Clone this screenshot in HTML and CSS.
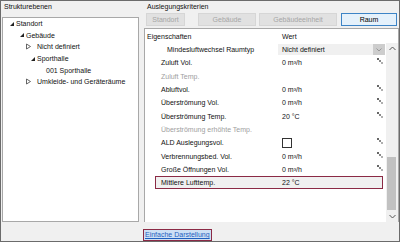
FILE: index.html
```html
<!DOCTYPE html>
<html lang="de">
<head>
    <meta charset="UTF-8">
    <title>Auslegungskriterien</title>
    <link rel="stylesheet" href="styles.css">
</head>
<body>
    <div class="window">
        <div class="pane">
            <div class="pane-title">Strukturebenen</div>
            <div class="tree">
                <div class="node lvl-0"><span class="toggle"><svg width="11" height="6"><polygon points="9,1 9,5 5,5" fill="#222"/></svg></span>Standort</div>
                <div class="node lvl-1"><span class="toggle"><svg width="11" height="6"><polygon points="9,1 9,5 5,5" fill="#222"/></svg></span>Gebäude</div>
                <div class="node lvl-2"><span class="toggle"><svg width="11" height="7"><polygon points="0.5,1 4.5,3.5 0.5,6" fill="none" stroke="#555" stroke-width="0.9"/></svg></span>Nicht definiert</div>
                <div class="node lvl-2"><span class="toggle"><svg width="11" height="6"><polygon points="9,1 9,5 5,5" fill="#222"/></svg></span>Sporthalle</div>
                <div class="node lvl-3"><span class="toggle"></span>001 Sporthalle</div>
                <div class="node lvl-2"><span class="toggle"><svg width="11" height="7"><polygon points="0.5,1 4.5,3.5 0.5,6" fill="none" stroke="#555" stroke-width="0.9"/></svg></span>Umkleide- und Geräteräume</div>
            </div>
        </div>

        <div class="pane pane-right">
            <div class="pane-title">Auslegungskriterien</div>
            <div class="tabs">
                <div class="tab tab-standort">Standort</div>
                <div class="tab tab-gebaeude">Gebäude</div>
                <div class="tab tab-einheit">Gebäudeeinheit</div>
                <div class="tab tab-raum active">Raum</div>
            </div>
            <div class="grid-panel">
                <div class="grid-head">
                    <span class="label">Eigenschaften</span>
                    <span class="value">Wert</span>
                </div>
                <div class="grid-body">
                    <div class="props">
                        <div class="row sub">
                            <span class="label">Mindesluftwechsel Raumtyp</span>
                            <span class="value select">Nicht definiert</span>
                            <span class="dropdown"><svg width="6" height="4"><polyline points="0.5,0.5 3,3 5.5,0.5" fill="none" stroke="#999"/></svg></span>
                        </div>
                        <div class="row">
                            <span class="label">Zuluft Vol.</span>
                            <span class="value">0 m³/h</span>
                            <span class="icon"><svg width="7" height="7"><rect x="0" y="0" width="2" height="2" fill="#666"/><rect x="2" y="2" width="2" height="2" fill="#8a8a8a"/><rect x="4" y="4" width="2" height="2" fill="#b0b0b0"/></svg></span>
                        </div>
                        <div class="row muted">
                            <span class="label">Zuluft Temp.</span>
                        </div>
                        <div class="row">
                            <span class="label">Abluftvol.</span>
                            <span class="value">0 m³/h</span>
                            <span class="icon"><svg width="7" height="7"><rect x="0" y="0" width="2" height="2" fill="#666"/><rect x="2" y="2" width="2" height="2" fill="#8a8a8a"/><rect x="4" y="4" width="2" height="2" fill="#b0b0b0"/></svg></span>
                        </div>
                        <div class="row">
                            <span class="label">Überströmung Vol.</span>
                            <span class="value">0 m³/h</span>
                            <span class="icon"><svg width="7" height="7"><rect x="0" y="0" width="2" height="2" fill="#666"/><rect x="2" y="2" width="2" height="2" fill="#8a8a8a"/><rect x="4" y="4" width="2" height="2" fill="#b0b0b0"/></svg></span>
                        </div>
                        <div class="row">
                            <span class="label">Überströmung Temp.</span>
                            <span class="value">20 °C</span>
                            <span class="icon"><svg width="7" height="7"><rect x="0" y="0" width="2" height="2" fill="#666"/><rect x="2" y="2" width="2" height="2" fill="#8a8a8a"/><rect x="4" y="4" width="2" height="2" fill="#b0b0b0"/></svg></span>
                        </div>
                        <div class="row muted">
                            <span class="label">Überströmung erhöhte Temp.</span>
                        </div>
                        <div class="row">
                            <span class="label">ALD Auslegungsvol.</span>
                            <span class="value"><span class="check"></span></span>
                            <span class="icon"><svg width="7" height="7"><rect x="0" y="0" width="2" height="2" fill="#666"/><rect x="2" y="2" width="2" height="2" fill="#8a8a8a"/><rect x="4" y="4" width="2" height="2" fill="#b0b0b0"/></svg></span>
                        </div>
                        <div class="row">
                            <span class="label">Verbrennungsbed. Vol.</span>
                            <span class="value">0 m³/h</span>
                            <span class="icon"><svg width="7" height="7"><rect x="0" y="0" width="2" height="2" fill="#666"/><rect x="2" y="2" width="2" height="2" fill="#8a8a8a"/><rect x="4" y="4" width="2" height="2" fill="#b0b0b0"/></svg></span>
                        </div>
                        <div class="row">
                            <span class="label">Große Öffnungen Vol.</span>
                            <span class="value">0 m³/h</span>
                            <span class="icon"><svg width="7" height="7"><rect x="0" y="0" width="2" height="2" fill="#666"/><rect x="2" y="2" width="2" height="2" fill="#8a8a8a"/><rect x="4" y="4" width="2" height="2" fill="#b0b0b0"/></svg></span>
                        </div>
                        <div class="row focus">
                            <span class="label">Mittlere Lufttemp.</span>
                            <span class="value">22 °C</span>
                        </div>
                    </div>
                    <div class="scrollbar">
                        <div class="arrow"><svg width="7" height="5"><polyline points="0.5,4 3.5,1 6.5,4" fill="none" stroke="#555"/></svg></div>
                        <div class="track"><div class="thumb"></div></div>
                        <div class="arrow"><svg width="7" height="5"><polyline points="0.5,1 3.5,4 6.5,1" fill="none" stroke="#555"/></svg></div>
                    </div>
                </div>
            </div>
        </div>

        <div class="footer">
            <a class="link" href="#">Einfache Darstellung</a>
        </div>
    </div>
</body>
</html>
```

FILE: styles.css
```css
body {
    margin: 0;
    font-family: "Liberation Sans", Arial, sans-serif;
    font-size: 7px;
    color: #111;
}
.window {
    width: 400px;
    height: 242px;
    box-sizing: border-box;
    border: 1px solid #6b6b6b;
    background-color: #f0f0f0;
    display: grid;
    grid-template-columns: 143px 1fr;
    grid-template-rows: 221px 1fr;
}
.pane {
    display: flex;
    flex-direction: column;
    min-height: 0;
}
.pane-title {
    height: 12px;
    line-height: 11px;
    padding-left: 3px;
}
.tree {
    margin: 4px 0 0 1px;
    width: 137px;
    height: 205px;
    box-sizing: border-box;
    border: 1px solid #a8a8a8;
    background-color: #fff;
}
.node {
    display: flex;
    align-items: center;
    height: 11.6px;
    white-space: nowrap;
}
.toggle {
    flex: none;
    width: 11px;
    display: flex;
    align-items: center;
}
.lvl-0 { padding-left: 2px; }
.lvl-1 { padding-left: 12px; }
.lvl-2 { padding-left: 23px; }
.lvl-3 { padding-left: 32px; }

.tabs {
    display: flex;
    height: 13px;
    padding-left: 2px;
}
.tab {
    box-sizing: border-box;
    border: 1px solid #d6d6d6;
    background-color: #e1e1e1;
    color: #a6a6a6;
    text-align: center;
    line-height: 11px;
}
.tab-standort { width: 39px; }
.tab-gebaeude { width: 58px; margin-left: 13px; }
.tab-einheit { width: 78px; margin-left: 3px; }
.tab-raum { width: 56px; margin-left: 4px; }
.tab.active {
    background-color: #e5f1fb;
    border-color: #3d84c6;
    color: #000;
}
.grid-panel {
    flex: 1;
    margin-top: 2px;
    border: 1px solid #a8a8a8;
    border-bottom: none;
    background-color: #fff;
    display: flex;
    flex-direction: column;
    min-height: 0;
}
.grid-head {
    display: flex;
    height: 14px;
    align-items: center;
}
.grid-head .label {
    width: 137px;
    padding-left: 2px;
    box-sizing: border-box;
}
.grid-body {
    flex: 1;
    display: flex;
    min-height: 0;
}
.props {
    flex: 1;
}
.row {
    display: flex;
    align-items: center;
    height: 13.3px;
    white-space: nowrap;
}
.row .label {
    width: 137px;
    padding-left: 16px;
    box-sizing: border-box;
}
.row .value {
    flex: 1;
    display: flex;
    align-items: center;
}
.row.sub .label {
    width: 133px;
    padding-left: 22px;
}
.row .select {
    height: 11px;
    padding-left: 4px;
    background-color: #f0f0f0;
}
.dropdown {
    width: 12px;
    height: 11px;
    margin-right: 1px;
    background-color: #cdcdcd;
    display: flex;
    align-items: center;
    justify-content: center;
}
.icon {
    width: 9px;
    display: flex;
    align-items: center;
    margin-top: -2px;
}
.row.muted {
    color: #a0a0a0;
}
.check {
    width: 8px;
    height: 8px;
    border: 1px solid #333;
    background-color: #fff;
}
.row.focus {
    margin: 0 3px 0 10px;
    background-color: #f0f0f0;
    box-shadow: inset 0 0 0 1px #8b2a45;
}
.row.focus .label {
    width: 127px;
    padding-left: 6px;
}
.scrollbar {
    width: 12px;
    background-color: #f0f0f0;
    display: flex;
    flex-direction: column;
}
.arrow {
    height: 11px;
    display: flex;
    align-items: center;
    justify-content: center;
}
.track {
    flex: 1;
}
.thumb {
    margin: 103px 0 0 1px;
    width: 9px;
    height: 53px;
    background-color: #c1c1c1;
}
.footer {
    grid-column: 1 / -1;
    display: flex;
    align-items: flex-end;
    padding-left: 142px;
}
.link {
    border: 1px solid #8b2a45;
    background-color: #cde0f5;
    color: #1f5fbf;
    line-height: 10px;
    padding: 0 1px;
}
```
